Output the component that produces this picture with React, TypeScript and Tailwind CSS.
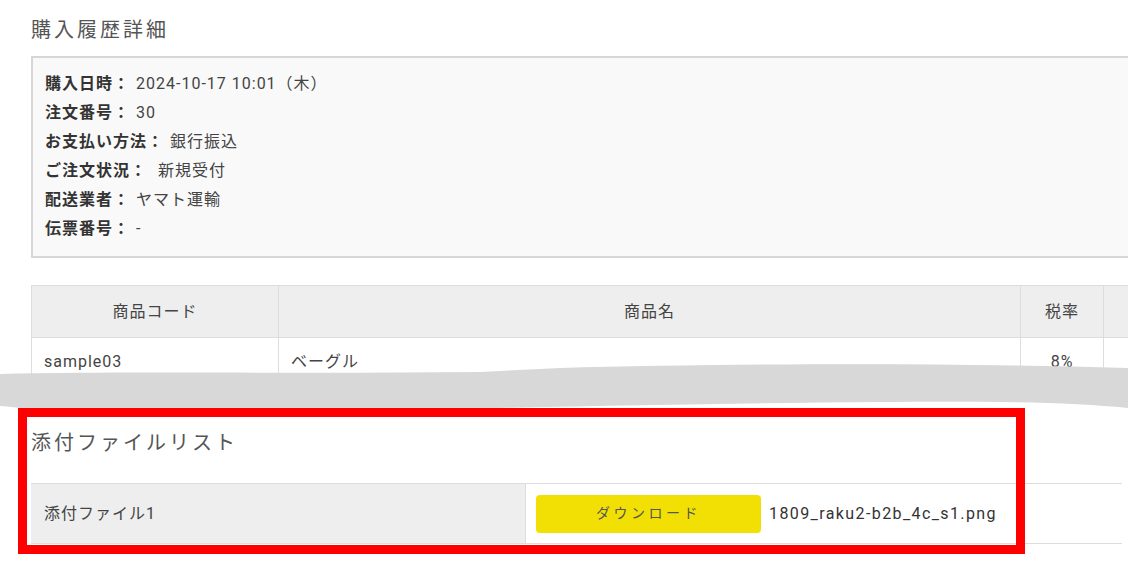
export default function App() {
  const info = [
    { label: '購入日時：', value: '2024-10-17 10:01（木）' },
    { label: '注文番号：', value: '30' },
    { label: 'お支払い方法：', value: '銀行振込' },
    { label: 'ご注文状況：', value: ' 新規受付' },
    { label: '配送業者：', value: 'ヤマト運輸' },
    { label: '伝票番号：', value: '-' },
  ]

  return (
    <div
      className="relative w-[1128px] h-[564px] overflow-hidden bg-white text-[#444] tracking-[1px]"
      style={{ fontFamily: 'Roboto, "Noto Sans CJK JP", sans-serif' }}
    >
      <div className="pl-[31px] pt-4">
        <h2 className="text-[20px] leading-[28px] tracking-[3px] text-[#555]">購入履歴詳細</h2>

        <div className="mt-3 w-[1120px] h-[202px] border-2 border-[#d6d6d6] bg-[#f9f9f9] pl-3 pt-[11px]">
          {info.map((row) => (
            <div key={row.label} className="text-[16px] leading-[29px] whitespace-pre">
              <span className="font-bold text-[#333]">{row.label}</span>
              <span className="ml-[6px]">{row.value}</span>
            </div>
          ))}
        </div>

        <div className="mt-[27px] h-[115px] overflow-hidden">
          <table className="w-[1200px] border-collapse text-[16px]">
            <thead>
              <tr className="bg-[#eeeeee] h-[52px]">
                <th className="w-[247px] border border-[#dddddd] font-normal">商品コード</th>
                <th className="w-[742px] border border-[#dddddd] font-normal">商品名</th>
                <th className="w-[83px] border border-[#dddddd] font-normal">税率</th>
                <th className="border border-[#dddddd] font-normal"></th>
              </tr>
            </thead>
            <tbody>
              <tr className="h-[48px]">
                <td className="border border-[#dddddd] px-3">sample03</td>
                <td className="border border-[#dddddd] px-3">ベーグル</td>
                <td className="border border-[#dddddd] text-center">8%</td>
                <td className="border border-[#dddddd]"></td>
              </tr>
              <tr className="h-[48px]">
                <td className="border border-[#dddddd]"></td>
                <td className="border border-[#dddddd]"></td>
                <td className="border border-[#dddddd]"></td>
                <td className="border border-[#dddddd]"></td>
              </tr>
            </tbody>
          </table>
        </div>

        <h2 className="mt-[29px] text-[20px] leading-[28px] tracking-[3px] text-[#555]">添付ファイルリスト</h2>

        <div className="mt-[26px] w-[1091px] flex border-y border-[#dddddd] h-[61px]">
          <div className="w-[495px] bg-[#eeeeee] border-r border-[#dddddd] flex items-center pl-[13px] text-[16px]">
            添付ファイル1
          </div>
          <div className="flex-1 flex items-center pl-[10px] gap-2">
            <button className="w-[225px] h-[38px] rounded bg-[#f2e004] text-[14px] tracking-[3.5px] text-[#555]">
              ダウンロード
            </button>
            <span className="text-[16px] tracking-[1.4px] text-[#333]">1809_raku2-b2b_4c_s1.png</span>
          </div>
        </div>
      </div>

      <svg className="absolute inset-0 pointer-events-none" width="1128" height="564" viewBox="0 0 1128 564">
        <path
          d="M0 374 C 120 371, 300 374, 480 372 L 560 368 C 720 364, 920 362, 1128 368 L 1128 408 C 1070 402, 980 401, 880 402 C 760 403, 640 405, 500 408 L 20 408 C 12 407, 6 406, 0 406 Z"
          fill="#d8d8d8"
        />
      </svg>

      <div className="absolute left-[18px] top-[408px] w-[1007px] h-[146px] border-[9px] border-[#ff0000] pointer-events-none" />
    </div>
  )
}
